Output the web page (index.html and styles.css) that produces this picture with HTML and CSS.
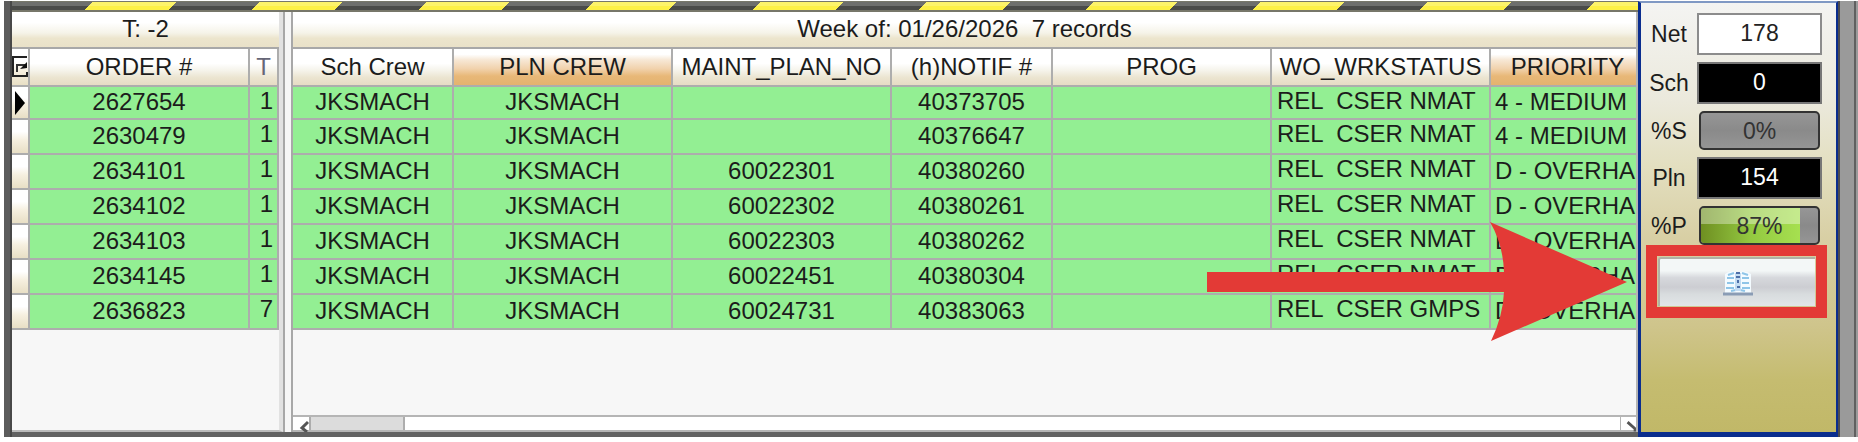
FILE: index.html
```
<!DOCTYPE html>
<html lang="en">
<head>
    <meta charset="UTF-8">
    <meta name="viewport" content="width=device-width, initial-scale=1.0">
    <title>Weekly Schedule</title>
    <link rel="stylesheet" href="styles.css">
</head>
<body>
    <div class="app">
        <div class="gutter"></div>
        <main class="schedule">
            <div class="hazard"></div>
            <div class="panes">
                <section class="pane pane-left">
                    <div class="band">T: -2</div>
                    <table class="grid">
                        <colgroup>
                            <col class="w-mark"><col class="w-order"><col class="w-t">
                        </colgroup>
                        <thead>
                            <tr>
                                <th class="mark">
                                    <svg width="16" height="24" viewBox="0 0 16 24">
                                        <path d="M15 2H1v19h14v-4" fill="none" stroke="#222" stroke-width="2"/>
                                        <path d="M5 17V10h10" fill="none" stroke="#333" stroke-width="2"/>
                                        <path d="M8 14l7-7v6z" fill="#111"/>
                                    </svg>
                                </th>
                                <th>ORDER #</th>
                                <th class="t-head">T</th>
                            </tr>
                        </thead>
                        <tbody>
                            <tr>
                                <td class="mark">
                                    <svg width="14" height="24" viewBox="0 0 14 24"><path d="M3 0l10 12L3 24z" fill="#000"/></svg>
                                </td>
                                <td>2627654</td><td class="t">1</td>
                            </tr>
                            <tr><td class="mark"></td><td>2630479</td><td class="t">1</td></tr>
                            <tr><td class="mark"></td><td>2634101</td><td class="t">1</td></tr>
                            <tr><td class="mark"></td><td>2634102</td><td class="t">1</td></tr>
                            <tr><td class="mark"></td><td>2634103</td><td class="t">1</td></tr>
                            <tr><td class="mark"></td><td>2634145</td><td class="t">1</td></tr>
                            <tr><td class="mark"></td><td>2636823</td><td class="t">7</td></tr>
                        </tbody>
                    </table>
                </section>
                <div class="splitter"></div>
                <section class="pane pane-right">
                    <div class="band">Week of: 01/26/2026  7 records</div>
                    <table class="grid">
                        <colgroup>
                            <col class="w-small"><col class="w-large"><col class="w-large"><col class="w-small"><col class="w-large"><col class="w-large"><col class="w-priority">
                        </colgroup>
                        <thead>
                            <tr>
                                <th>Sch Crew</th>
                                <th class="sorted">PLN CREW</th>
                                <th>MAINT_PLAN_NO</th>
                                <th>(h)NOTIF #</th>
                                <th>PROG</th>
                                <th>WO_WRKSTATUS</th>
                                <th class="sorted">PRIORITY</th>
                            </tr>
                        </thead>
                        <tbody>
                            <tr><td>JKSMACH</td><td>JKSMACH</td><td></td><td>40373705</td><td></td><td class="status">REL  CSER NMAT</td><td class="priority">4 - MEDIUM</td></tr>
                            <tr><td>JKSMACH</td><td>JKSMACH</td><td></td><td>40376647</td><td></td><td class="status">REL  CSER NMAT</td><td class="priority">4 - MEDIUM</td></tr>
                            <tr><td>JKSMACH</td><td>JKSMACH</td><td>60022301</td><td>40380260</td><td></td><td class="status">REL  CSER NMAT</td><td class="priority">D - OVERHA</td></tr>
                            <tr><td>JKSMACH</td><td>JKSMACH</td><td>60022302</td><td>40380261</td><td></td><td class="status">REL  CSER NMAT</td><td class="priority">D - OVERHA</td></tr>
                            <tr><td>JKSMACH</td><td>JKSMACH</td><td>60022303</td><td>40380262</td><td></td><td class="status">REL  CSER NMAT</td><td class="priority">D - OVERHA</td></tr>
                            <tr><td>JKSMACH</td><td>JKSMACH</td><td>60022451</td><td>40380304</td><td></td><td class="status">REL  CSER NMAT</td><td class="priority">D - OVERHA</td></tr>
                            <tr><td>JKSMACH</td><td>JKSMACH</td><td>60024731</td><td>40383063</td><td></td><td class="status">REL  CSER GMPS</td><td class="priority">D - OVERHA</td></tr>
                        </tbody>
                    </table>
                    <div class="scrollbar">
                        <svg width="16" height="15" viewBox="0 0 16 15"><path d="M15 5l-6 6 5 4" fill="none" stroke="#555" stroke-width="3"/></svg>
                        <div class="thumb"></div>
                        <div class="track"></div>
                        <svg class="scroll-end" width="16" height="15" viewBox="0 0 16 15"><path d="M7 5l8 7v3" fill="none" stroke="#555" stroke-width="3"/></svg>
                    </div>
                </section>
            </div>
            <svg class="arrow" width="420" height="120" viewBox="0 0 420 120">
                <path d="M0 50H297Q296 22 283 0L420 60L284 119Q296 94 297 70H0Z" fill="#e33a36"/>
            </svg>
        </main>

        <aside class="totals">
            <div class="fields">
                <label for="net">Net</label>
                <input class="net" id="net" type="text" value="178" readonly>
                <label for="sch">Sch</label>
                <input id="sch" type="text" value="0" readonly>
                <span id="pct-s">%S</span>
                <div class="meter" role="progressbar" aria-labelledby="pct-s" aria-valuenow="0"><span>0%</span></div>
                <label for="pln">Pln</label>
                <input id="pln" type="text" value="154" readonly>
                <span id="pct-p">%P</span>
                <div class="meter" role="progressbar" aria-labelledby="pct-p" aria-valuenow="87">
                    <div class="fill" style="width: 85%"></div>
                    <span>87%</span>
                </div>
            </div>
            <div class="highlight">
                <button type="button" aria-label="Open book">
                    <svg width="30" height="26" viewBox="0 0 30 26">
                        <path d="M2 4Q9-1 15 3Q21-1 28 4V23H2Z" fill="#f4fbff"/>
                        <path d="M5 5l6-2M19 3l6 2M4 8h7M19 8h7M4 13h7M19 13h7M3 18h8M19 18h8M8 21l5-1M17 20l5 1" stroke="#8fc5e8" stroke-width="2"/>
                        <path d="M12 3h6v18h-6z" fill="#c3dcf2"/>
                        <path d="M13 3h4M13 7h4M15 10v3M14 17h3" stroke="#4d6fa8" stroke-width="2"/>
                        <path d="M0 24h30" stroke="#8a9cb5" stroke-width="3"/>
                    </svg>
                </button>
            </div>
        </aside>
        <div class="edge"></div>
    </div>
</body>
</html>
```
FILE: styles.css
```
* {
    box-sizing: border-box;
}
body {
    margin: 0;
    background: #fff;
    color: #1c1c1c;
    font-family: "Liberation Sans", Arial, sans-serif;
    font-size: 24px;
    line-height: 32px;
}
.app {
    display: flex;
    height: 100vh;
    padding: 1px 0 5px 4px;
    overflow: hidden;
}
.gutter {
    width: 8px;
    background: #5c5c5c;
    border-right: 2px solid #484848;
}

/* schedule */
.schedule {
    position: relative;
    flex: 1;
    min-width: 0;
    display: flex;
    flex-direction: column;
    border-bottom: 5px solid #626262;
}
.hazard {
    height: 11px;
    border: solid #77776a;
    border-width: 1px 0 2px;
    background: linear-gradient(rgba(255, 255, 255, 0.2) 50%, transparent 50%),
        repeating-linear-gradient(135deg, #4a4b49 -2px 57px, #fdf046 57px 116px);
}
.panes {
    flex: 1;
    min-height: 0;
    display: flex;
}
.pane {
    display: flex;
    flex-direction: column;
    background: #f7f7f7;
    overflow: hidden;
}
.pane-left {
    width: 271px;
    border-right: 4px solid #e2e2e2;
    border-bottom: 2px solid #bbb;
}
.pane-right {
    flex: 1;
    min-width: 0;
    border-right: 2px solid #b5b5b5;
}
.splitter {
    width: 10px;
    background: #f7f7f7;
    border: solid #a8a8a8;
    border-width: 0 2px;
}
.band {
    height: 37px;
    padding-top: 1px;
    border-bottom: 2px solid #a8a8a8;
    background: linear-gradient(#fff 30%, #f5f3e8 60%, #ece5cd 75%, #e9e1c8);
    text-align: center;
    white-space: pre;
}

/* grid */
.grid {
    table-layout: fixed;
    width: 0;
    border-spacing: 0;
}
.w-mark {
    width: 18px;
}
.w-order {
    width: 220px;
}
.w-t {
    width: 29px;
}
.w-small {
    width: 161px;
}
.w-large {
    width: 219px;
}
.w-priority {
    width: 155px;
}
.grid th,
.grid td {
    height: 35px;
    padding: 0 0 1px;
    border: solid #adadad;
    border-width: 0 2px 2px 0;
    line-height: 30px;
    text-align: center;
    white-space: pre;
    overflow: hidden;
}
.grid th {
    height: 38px;
    background: linear-gradient(#fff 40%, #f5f3ea 60%, #ebe4d0 80%, #e6dcc4);
    font-weight: normal;
}
.grid .sorted {
    background: linear-gradient(#fff 15%, #f7e8d6 30%, #f1d2ac 55%, #e8b878 75%, #e4b36e);
}
.grid td {
    background: #93ef93;
}
.grid tbody tr:first-child td {
    height: 33px;
}
.grid .mark {
    padding: 0;
    background: linear-gradient(#fff 35%, #f6f0e0 60%, #e8dfc5);
    line-height: 0;
}
.grid .mark svg {
    display: block;
}
.grid .t-head {
    color: #667;
}
.grid .t {
    padding: 0 4px 2px 0;
    line-height: 28px;
    text-align: right;
    vertical-align: top;
}
.grid .status {
    padding: 0 0 2px 5px;
    line-height: 28px;
    text-align: left;
    vertical-align: top;
}
.grid .priority {
    padding-left: 4px;
    text-align: left;
}
.scrollbar {
    display: flex;
    height: 17px;
    margin-top: auto;
    border: solid #b5b5b5;
    border-width: 2px 0;
    background: #fff;
}
.thumb {
    width: 96px;
    background: #dcdcdc;
    border: solid #adadad;
    border-width: 0 2px;
}
.track {
    flex: 1;
}
.scroll-end {
    border-left: 1px solid #b5b5b5;
}
.arrow {
    position: absolute;
    top: 221px;
    right: 11px;
}

/* totals */
.totals {
    width: 200px;
    border: solid #0a2d8e;
    border-width: 2px 2px 5px 3px;
    border-top-color: #8099c4;
    background: linear-gradient(#f4f4f2, #ebe9dc 23%, #e3dfc0 38%, #d8cfa4 55%, #cfc58c 75%, #c5bc70 88%, #c1b868);
}
.fields {
    display: grid;
    grid-template-columns: 46px 125px;
    gap: 7px 5px;
    align-items: center;
    padding: 10px 0 0 5px;
    font-size: 23px;
    text-align: center;
}
.fields input {
    width: 125px;
    height: 42px;
    padding: 0 0 2px;
    border: 2px solid #777;
    border-radius: 0;
    background: #000;
    color: #fff;
    font: inherit;
    text-align: center;
}
.fields .net {
    background: #fff;
    border-color: #8c8c8c;
    color: #222;
}
.meter {
    display: grid;
    height: 39px;
    margin: 0 2px;
    border: 2px solid #333;
    border-radius: 5px;
    background: linear-gradient(#969696, #8a8a8a 50%, #959595);
    color: #333;
    overflow: hidden;
}
.meter > * {
    grid-area: 1 / 1;
}
.meter span {
    align-self: center;
}
.fill {
    background: linear-gradient(rgba(255, 255, 255, 0.35) 45%, transparent 45%),
        linear-gradient(90deg, #6f8f22, #93c840 50%, #a6e050);
}
.highlight {
    width: 181px;
    height: 73px;
    margin: 0 0 0 5px;
    padding: 1px;
    border: 11px solid #e33a36;
}
.highlight button {
    display: flex;
    align-items: center;
    justify-content: center;
    width: 100%;
    height: 100%;
    padding: 0;
    border: solid #b0b2a8;
    border-width: 2px 0 0 2px;
    border-radius: 3px 0 0 0;
    background: linear-gradient(#f3f7f7 25%, #d6d8dc 40%, #cccdd2 60%, #d8dcde 75%, #e2e5e8);
}

.edge {
    width: 20px;
    background: linear-gradient(90deg, #4c4c50 2px, #9a9a9a 2px 16px, #606060 16px 18px, #9a9a9a 18px);
}
```
